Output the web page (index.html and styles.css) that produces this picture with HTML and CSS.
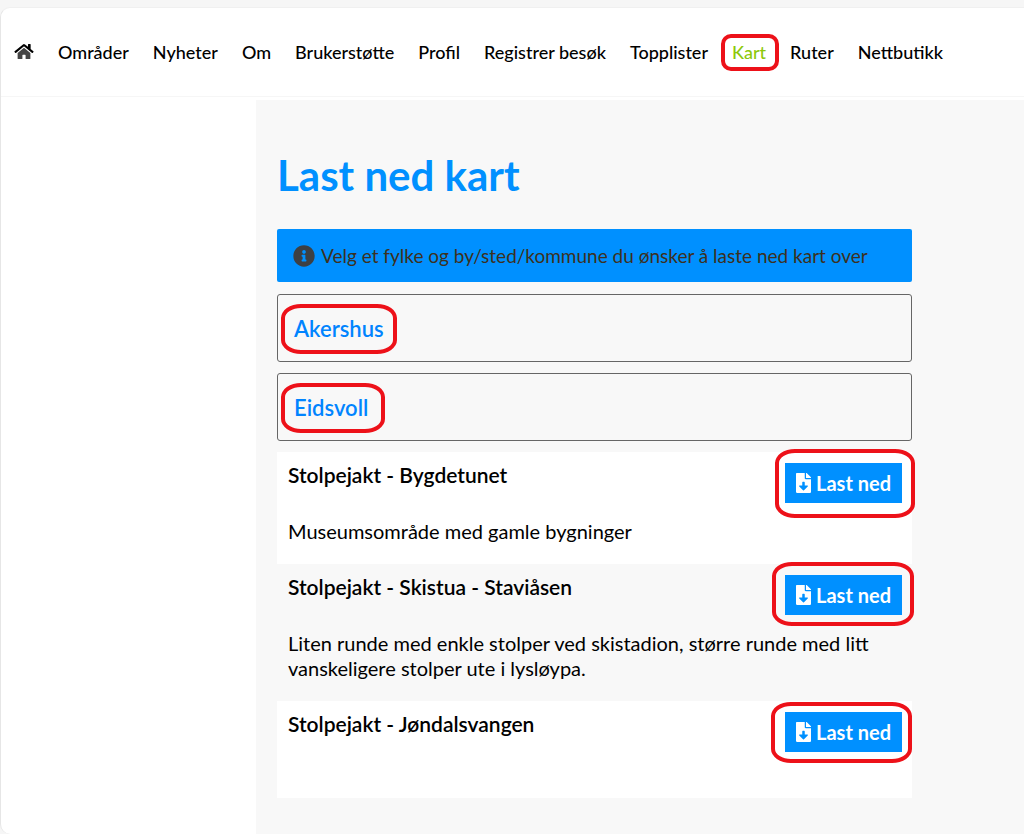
FILE: index.html
```html
<!DOCTYPE html>
<html lang="no">
<head>
<meta charset="utf-8">
<meta name="viewport" content="width=device-width, initial-scale=1">
<title>Last ned kart</title>
<link rel="stylesheet" href="styles.css">
</head>
<body>
<svg class="sprite" aria-hidden="true">
  <symbol id="file-download" viewBox="0 0 384 512"><path d="M224 136V0H24C10.7 0 0 10.7 0 24v464c0 13.300 10.700 24 24 24h336c13.300 0 24-10.700 24-24V160H248c-13.200 0-24-10.800-24-24zm76.450 211.360l-96.420 95.700c-6.650 6.610-17.390 6.610-24.040 0l-96.420-95.700C73.420 337.290 80.540 320 94.820 320H160v-80c0-8.840 7.160-16 16-16h32c8.840 0 16 7.160 16 16v80h65.180c14.280 0 21.400 17.290 11.270 27.360zM377 105L279.100 7c-4.500-4.500-10.600-7-17-7H256v128h128v-6.100c0-6.300-2.500-12.400-7-16.900z"/></symbol>
</svg>
<div class="frame">
  <nav class="nav" aria-label="Hovedmeny">
    <a class="home" href="#" aria-label="Hjem"><svg viewBox="0 0 576 512" aria-hidden="true"><path class="house" d="M280.37 148.26L96 300.11V464a16 16 0 0 0 16 16l112.06-.29a16 16 0 0 0 15.92-16V368a16 16 0 0 1 16-16h64a16 16 0 0 1 16 16v95.64a16 16 0 0 0 16 16.05L464 480a16 16 0 0 0 16-16V300L295.67 148.26a12.190 12.190 0 0 0-15.300 0z"/><path d="M571.6 251.47L488 182.56V44.05a12 12 0 0 0-12-12h-56a12 12 0 0 0-12 12v72.61L318.47 43a48 48 0 0 0-61 0L4.34 251.47a12 12 0 0 0-1.6 16.9l25.5 31A12 12 0 0 0 45.15 301l235.22-193.74a12.190 12.190 0 0 1 15.300 0L530.900 301a12 12 0 0 0 16.900-1.600l25.500-31a12 12 0 0 0-1.700-16.930z"/></svg></a>
    <a href="#">Områder</a>
    <a href="#">Nyheter</a>
    <a href="#">Om</a>
    <a href="#">Brukerstøtte</a>
    <a href="#">Profil</a>
    <a href="#">Registrer besøk</a>
    <a href="#">Topplister</a>
    <a class="current ring ring-nav" href="#" aria-current="page">Kart</a>
    <a href="#">Ruter</a>
    <a href="#">Nettbutikk</a>
  </nav>
  <main class="main">
    <h1>Last ned kart</h1>
    <p class="notice"><svg viewBox="0 0 512 512" aria-hidden="true"><path d="M256 8C119.043 8 8 119.083 8 256c0 136.997 111.043 248 248 248s248-111.003 248-248C504 119.083 392.957 8 256 8zm0 110c23.196 0 42 18.804 42 42s-18.804 42-42 42-42-18.804-42-42 18.804-42 42-42zm56 254c0 6.627-5.373 12-12 12h-88c-6.627 0-12-5.373-12-12v-24c0-6.627 5.373-12 12-12h12v-64h-12c-6.627 0-12-5.373-12-12v-24c0-6.627 5.373-12 12-12h64c6.627 0 12 5.373 12 12v100h12c6.627 0 12 5.373 12 12v24z"/></svg><span>Velg et fylke og by/sted/kommune du ønsker å laste ned kart over</span></p>
    <div class="panel"><a class="ring ring-county" href="#">Akershus</a></div>
    <div class="panel"><a class="ring ring-town" href="#">Eidsvoll</a></div>
    <section class="maps">
      <article class="map">
        <h2>Stolpejakt - Bygdetunet</h2>
        <button class="ring ring-first" type="button"><svg aria-hidden="true"><use href="#file-download"/></svg>Last ned</button>
        <p>Museumsområde med gamle bygninger</p>
      </article>
      <article class="map">
        <h2>Stolpejakt - Skistua - Staviåsen</h2>
        <button class="ring ring-second" type="button"><svg aria-hidden="true"><use href="#file-download"/></svg>Last ned</button>
        <p>Liten runde med enkle stolper ved skistadion, større runde med litt vanskeligere stolper ute i lysløypa.</p>
      </article>
      <article class="map">
        <h2>Stolpejakt - Jøndalsvangen</h2>
        <button class="ring ring-third" type="button"><svg aria-hidden="true"><use href="#file-download"/></svg>Last ned</button>
      </article>
    </section>
  </main>
</div>
</body>
</html>
```
FILE: styles.css
```css
* { box-sizing: border-box; }
body {
  margin: 0;
  padding-top: 7px;
  background: #f6f6f6;
  color: #000;
  font-family: Lato, "Liberation Sans", sans-serif;
}
h1, h2, p { margin: 0; }
a { text-decoration: none; }
.sprite { display: none; }

.frame {
  display: flex;
  flex-direction: column;
  min-height: calc(100vh - 7px);
  background: #fff;
  border: 1px solid #e6e6e6;
  border-top-color: #f0f0f0;
  border-right: 0;
  border-bottom: 0;
  border-radius: 10px 0 0 10px;
}

.nav {
  display: flex;
  align-items: center;
  gap: 24px;
  height: 89px;
  padding: 0 13px 1px;
  border-bottom: 1px solid #f6f6f6;
  font-size: 18px;
  font-weight: 500;
  line-height: 24px;
  white-space: nowrap;
}
.nav a { color: #000; }
.nav a.current { color: #8cc80a; }
.home { display: flex; }
.home svg { width: 20px; height: 17px; }
.home .house { fill: #444; }

.main {
  flex: 1;
  margin: 3px 0 0 255px;
  padding: 47px 112px 35px 21px;
  background: #f8f8f8;
}
h1 {
  color: #0090ff;
  font-size: 42px;
  font-weight: 700;
  line-height: 56px;
}
.notice {
  display: flex;
  align-items: center;
  gap: 6px;
  min-height: 53px;
  margin: 26px 0 12px;
  padding: 0 16px;
  border-radius: 2px;
  background: #0090ff;
  color: #3d3020;
  font-size: 19px;
}
.notice svg { flex: none; width: 22px; height: 22px; fill: #3d4044; }

.panel {
  display: flex;
  align-items: center;
  min-height: 68px;
  margin-bottom: 11px;
  padding: 0 16px;
  border: 1px solid #666;
  border-radius: 3px;
  font-size: 22px;
  font-weight: 600;
}
.panel a { color: #0084ff; }

.map {
  display: grid;
  grid-template-columns: 1fr auto;
  grid-template-rows: 52px auto;
  align-items: start;
  row-gap: 4px;
  min-height: 97px;
  padding: 11px 10px 20px 11px;
}
.map:nth-child(odd) { background: #fff; }
.map h2 { font-size: 21px; font-weight: 600; line-height: 24px; }
.map p {
  grid-column: 1 / -1;
  font-size: 20px;
  line-height: 25px;
}
.map button {
  display: flex;
  align-items: center;
  gap: 5px;
  height: 40px;
  padding: 0 11px;
  border: 0;
  background: #0090ff;
  color: #fff;
  font: 700 20px/26px Lato, "Liberation Sans", sans-serif;
}
.map button svg { width: 15px; height: 20px; fill: #fff; }

.ring { position: relative; }
.ring::after {
  content: "";
  position: absolute;
  border: 4px solid #ed1119;
  border-radius: 20px / 14px;
  pointer-events: none;
}
.ring-nav::after { inset: -6px -13px -7px -11px; border-radius: 10px; }
.ring-county::after { inset: -11px -13px -12px -13px; }
.ring-town::after { inset: -11px -17px -12px -13px; }
.ring-first::after { inset: -14px -13px -15px -10px; }
.ring-second::after { inset: -13px -12px -11px -13px; }
.ring-third::after { inset: -10px -10px -11px -14px; }
```
